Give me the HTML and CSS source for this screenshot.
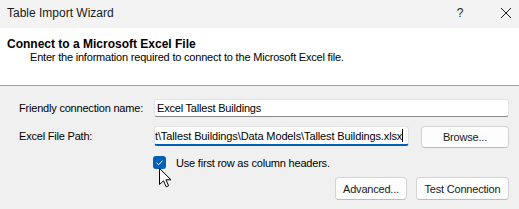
FILE: index.html
```html
<!DOCTYPE html>
<html>
<head>
<meta charset="utf-8">
<link rel="stylesheet" href="styles.css">
</head>
<body>
<div class="window">
  <div class="titlebar">
    <span class="title">Table Import Wizard</span>
    <span class="tb-help">?</span>
    <span class="tb-close">
      <svg width="12" height="12" viewBox="0 0 12 12"><path d="M1 1 L11 11 M11 1 L1 11" stroke="#1a1a1a" stroke-width="1" fill="none"/></svg>
    </span>
  </div>
  <div class="header">
    <div class="h-title">Connect to a Microsoft Excel File</div>
    <div class="h-sub">Enter the information required to connect to the Microsoft Excel file.</div>
  </div>
  <div class="content">
    <div class="row row1">
      <label class="lbl">Friendly connection name:</label>
      <div class="input wide"><span class="val">Excel Tallest Buildings</span></div>
    </div>
    <div class="row row2">
      <label class="lbl">Excel File Path:</label>
      <div class="input path focused"><span class="val path-val">t\Tallest Buildings\Data Models\Tallest Buildings.xlsx</span><span class="caret"></span></div>
      <button class="btn browse">Browse...</button>
    </div>
    <div class="row row3">
      <span class="lbl"></span>
      <span class="check">
        <svg width="13" height="13" viewBox="0 0 13 13"><path d="M3.5 6.8 L5.6 8.8 L9.6 4.6" stroke="#fff" stroke-width="1" fill="none"/></svg>
      </span>
      <span class="check-lbl">Use first row as column headers.</span>
      <svg class="cursor" width="13" height="20" viewBox="0 0 13 20"><path d="M0.5 0.5 L0.5 16.5 L4.5 12.8 L7.2 18.8 L9.6 17.8 L7 11.8 L12 11.8 Z" fill="#fff" stroke="#000" stroke-width="1" stroke-linejoin="miter"/></svg>
    </div>
    <div class="row row4">
      <button class="btn adv">Advanced...</button>
      <button class="btn test">Test Connection</button>
    </div>
  </div>
</div>
</body>
</html>
```
FILE: styles.css
```css
html, body {
  margin: 0;
  padding: 0;
}
body {
  width: 519px;
  height: 209px;
  overflow: hidden;
  background: #f0f0f0;
  font-family: "Liberation Sans", Arial, sans-serif;
  color: #000;
}
.window {
  width: 519px;
  height: 209px;
  display: flex;
  flex-direction: column;
}
.titlebar {
  height: 28px;
  box-sizing: border-box;
  background: #f3f3f3;
  display: flex;
  align-items: flex-start;
  padding: 6px 0 0 7px;
  font-size: 12px;
  line-height: 14px;
  color: #1a1a1a;
}
.title {
  flex: 1;
}
.tb-help {
  width: 14px;
  margin-right: 33px;
  text-align: center;
  font-size: 12px;
}
.tb-close {
  width: 12px;
  height: 12px;
  margin-top: 1px;
  margin-right: 7px;
  display: flex;
}
.header {
  height: 58px;
  box-sizing: border-box;
  background: #fff;
  padding: 9px 0 0 7px;
  border-bottom: 1px solid #a0a0a0;
}
.h-title {
  font-weight: bold;
  font-size: 12px;
  line-height: 14px;
}
.h-sub {
  font-size: 11px;
  line-height: 13px;
  letter-spacing: -0.2px;
  padding-left: 23px;
}
.content {
  flex: 1;
  padding: 13px 0 0 19px;
  font-size: 11px;
  letter-spacing: -0.2px;
  position: relative;
}
.row {
  display: flex;
  align-items: center;
}
.lbl {
  width: 135px;
  flex: none;
}
.row1 {
  height: 18px;
}
.row2 {
  margin-top: 9px;
  height: 22px;
  align-items: flex-start;
}
.row2 .lbl {
  line-height: 20px;
}
.row3 {
  margin-top: 8px;
  height: 13px;
  position: relative;
}
.row4 {
  margin-top: 8px;
  justify-content: flex-end;
  padding-right: 10px;
  gap: 9px;
}
.input {
  box-sizing: border-box;
  background: #fff;
  border: 1px solid #e3e3e3;
  border-bottom-color: #8a8a8a;
  border-radius: 3px;
  display: flex;
  align-items: center;
  overflow: hidden;
  white-space: nowrap;
}
.wide {
  width: 355px;
  height: 18px;
  padding-left: 2px;
}
.path {
  width: 255px;
  height: 20px;
  padding-left: 0;
}
.path-val {
  letter-spacing: -0.12px;
}
.focused {
  border-bottom: 2px solid #005fb8;
}
.caret {
  width: 1px;
  height: 13px;
  background: #000;
  flex: none;
}
.val {
  flex: none;
}
.btn {
  font-family: "Liberation Sans", Arial, sans-serif;
  font-size: 11px;
  letter-spacing: -0.2px;
  color: #1a1a1a;
  background: #fdfdfd;
  border: 1px solid #d3d3d3;
  border-bottom-color: #bdbdbd;
  border-radius: 4px;
  padding: 0;
  margin: 0;
  text-align: center;
}
.browse {
  width: 88px;
  height: 22px;
  margin-left: 12px;
}
.adv {
  width: 72px;
  height: 23px;
}
.test {
  width: 93px;
  height: 23px;
}
.check {
  width: 13px;
  height: 13px;
  margin-left: -1px;
  background: #005fb8;
  border-radius: 3px;
  display: flex;
  flex: none;
}
.check-lbl {
  margin-left: 10px;
  line-height: 13px;
  padding-top: 2px;
}
.cursor {
  position: absolute;
  left: 140px;
  top: 12px;
}
```
